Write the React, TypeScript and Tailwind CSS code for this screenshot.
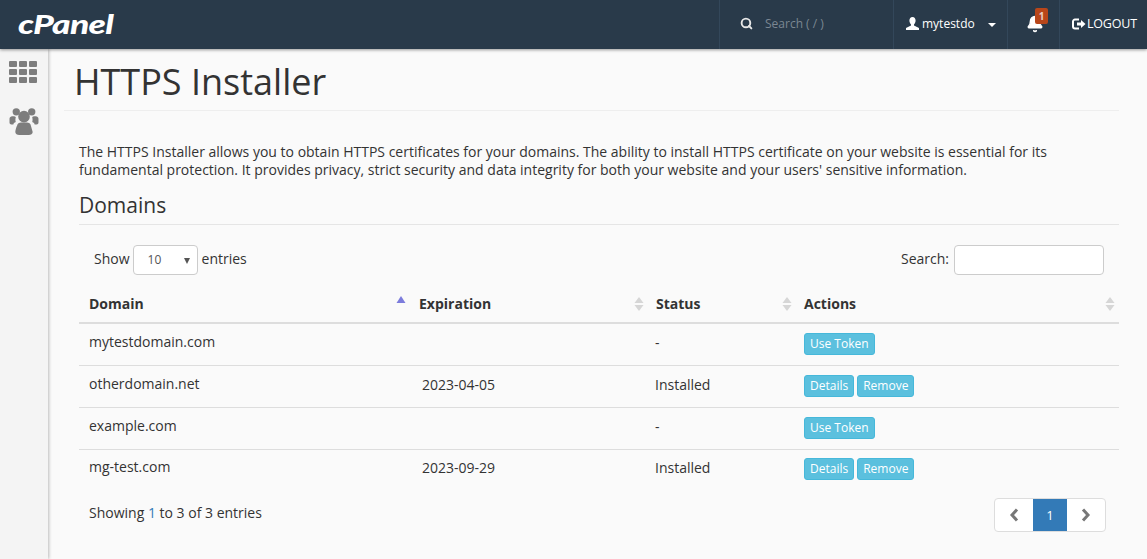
import { Search, Bell } from "lucide-react"

const rows = [
  { domain: "mytestdomain.com", expires: "", status: "-", installed: false },
  { domain: "otherdomain.net", expires: "2023-04-05", status: "Installed", installed: true },
  { domain: "example.com", expires: "", status: "-", installed: false },
  { domain: "mg-test.com", expires: "2023-09-29", status: "Installed", installed: true },
]

function SortArrows() {
  return (
    <svg width="10" height="16" viewBox="0 0 10 16" className="absolute right-0 top-[10px] fill-[#d6d6d6]">
      <path d="M5 1 9.5 7H.5z" />
      <path d="M5 15 9.5 9H.5z" />
    </svg>
  )
}

function InfoButton({ children }: { children: string }) {
  return (
    <button className="h-[22px] rounded-[3px] border border-[#46b8da] bg-[#5bc0de] px-[5px] text-xs leading-[18px] text-white">
      {children}
    </button>
  )
}

function Header() {
  return (
    <header className="relative z-10 flex h-[49px] shrink-0 items-center justify-between bg-[#293a4a] shadow-[0_1px_3px_rgba(0,0,0,0.4)]">
      <span className="mb-[2px] ml-[18px] inline-block origin-left scale-x-[1.36] font-['Lato'] text-[26px] font-black italic leading-none tracking-[-0.5px] text-white">cPanel</span>
      <div className="flex h-full">
        <div className="flex w-[174px] items-center border-l border-[#33475a] pb-[2px] pl-[20px]">
          <Search size={13} strokeWidth={3.5} className="text-[#e8e8e8]" />
          <span className="ml-[12px] text-xs text-[#7b8792]">Search ( / )</span>
        </div>
        <div className="flex w-[114px] items-center border-l border-[#33475a] pb-[2px] pl-[12px] text-xs text-white">
          <svg width="13" height="13" viewBox="0 0 13 13" className="fill-white">
            <path d="M6.5 0C8.4 0 9.6 1.5 9.6 3.6 9.6 5.300 8.800 6.700 8 7.500V8.500L13 11V13H0V11L5 8.500V7.500C4.200 6.700 3.400 5.300 3.400 3.600 3.400 1.500 4.600 0 6.500 0Z" />
          </svg>
          <span className="ml-[3px]">mytestdo</span>
          <span className="ml-[13px] mt-[3px] h-0 w-0 border-x-[4px] border-t-[4px] border-x-transparent border-t-white" />
        </div>
        <div className="relative flex w-[52px] items-center border-l border-[#33475a] pb-[2px] pl-[18px]">
          <Bell size={18} fill="white" className="text-white" />
          <span className="absolute left-[27px] top-[8px] flex h-[16px] w-[13px] items-center justify-center rounded-[2px] bg-[#b8461a] text-[10px] font-bold text-[#e9cfc4]">1</span>
        </div>
        <div className="flex w-[88px] items-center border-l border-[#33475a] pb-[2px] pl-[12px] text-[12.5px] text-white">
          <svg width="14" height="12" viewBox="0 0 14 12" className="fill-none stroke-white">
            <path strokeWidth="2" d="M7 1.500H3A2 2 0 0 0 1 3.500V8.500A2 2 0 0 0 3 10.500H7" />
            <path className="fill-white" strokeWidth="0" d="M5 4.500H9V2L13.500 6 9 10V7.500H5Z" />
          </svg>
          <span className="ml-[1px] tracking-[-0.2px]">LOGOUT</span>
        </div>
      </div>
    </header>
  )
}

function Sidebar() {
  return (
    <aside className="flex w-[48px] shrink-0 flex-col items-start bg-[#f4f4f4] pl-[9px] pt-[12px] shadow-[1px_0_3px_rgba(0,0,0,0.25)]">
      <div className="grid grid-cols-3 gap-[2px]">
        {Array.from({ length: 9 }).map((_, i) => (
          <span key={i} className="h-[6px] w-[8px] rounded-[1px] bg-[#7d7d7d]" />
        ))}
      </div>
      <svg width="30" height="28" viewBox="0 0 30 29" className="mt-[24px] fill-[#7d7d7d]">
        <circle cx="7" cy="5" r="3.800" />
        <circle cx="23" cy="5" r="3.800" />
        <path d="M0 12C0 10 2 9.500 4 9.500 5 9.500 6 10 6.500 10.500 6 12 6 14 6.500 15.500 5 16 4 17 4 18H2C.5 18 0 17 0 16Z" />
        <path d="M30 12C30 10 28 9.500 26 9.500 25 9.500 24 10 23.500 10.500 24 12 24 14 23.500 15.500 25 16 26 17 26 18H28C29.500 18 30 17 30 16Z" />
        <circle cx="15" cy="10" r="6" />
        <path d="M8 19C8 17 10 16 12 16H18C20 16 22 17 22 19L24 26C24 28 22 29 20 29H10C8 29 6 28 6 26 6 24 7 21 8 19Z" />
      </svg>
    </aside>
  )
}

export default function App() {
  return (
    <div className="flex h-[559px] flex-col overflow-hidden bg-[#fafafa] font-['Open_Sans',sans-serif] text-sm text-[#333]">
      <Header />
      <div className="flex flex-1">
        <Sidebar />
        <main className="flex-1 pl-[16px] pr-[28px]">
          <h1 className="h-[62px] border-b border-[#eeeeee] pl-[10px] pt-[11px] text-[36px] leading-[44px]">HTTPS Installer</h1>
          <div className="pl-[15px]">
            <p className="mt-[32px] leading-[18px]">
              The HTTPS Installer allows you to obtain HTTPS certificates for your domains. The ability to install HTTPS certificate on your website is essential for its fundamental protection. It provides privacy, strict security and data integrity for both your website and your users' sensitive information.
            </p>
            <h2 className="mt-[12px] h-[34px] border-b border-[#e5e5e5] text-[21px] leading-[28px]">Domains</h2>
            <div className="mt-[19px] flex h-[31px] items-center justify-between pl-[15px] pr-[15px]">
              <div className="flex items-center">
                <span className="pb-[2px]">Show</span>
                <div className="relative ml-[3px] flex h-[30px] w-[65px] items-center rounded border border-[#cccccc] bg-white pl-[14px] text-xs text-[#555]">
                  10
                  <span className="absolute right-[7px] top-[12px] h-0 w-0 border-x-[3.500px] border-t-[6px] border-x-transparent border-t-[#555]" />
                </div>
                <span className="ml-[4px] pb-[2px]">entries</span>
              </div>
              <div className="flex items-center">
                <span className="pb-[2px]">Search:</span>
                <div className="ml-[5px] h-[30px] w-[150px] rounded border border-[#cccccc] bg-white" />
              </div>
            </div>
            <table className="mt-[11px] w-full table-fixed border-collapse">
              <thead>
                <tr className="h-[37px] border-b-2 border-[#dddddd] text-left font-bold">
                  <th className="relative w-[330px] pb-[1px] pl-[10px]">
                    Domain
                    <svg width="10" height="7" viewBox="0 0 10 7" className="absolute right-[3px] top-[10px] fill-[#7c7cdc]">
                      <path d="M5 0 9.500 7H.5z" />
                    </svg>
                  </th>
                  <th className="relative w-[237px] pb-[1px] pl-[10px]">Expiration<div className="absolute inset-y-0 right-[2px]"><SortArrows /></div></th>
                  <th className="relative w-[148px] pb-[1px] pl-[10px]">Status<div className="absolute inset-y-0 right-[2px]"><SortArrows /></div></th>
                  <th className="relative pb-[1px] pl-[10px]">Actions<div className="absolute inset-y-0 right-[4px]"><SortArrows /></div></th>
                </tr>
              </thead>
              <tbody>
                {rows.map((row) => (
                  <tr key={row.domain} className="h-[42px] border-b border-[#dddddd] last:h-[40px] last:border-b-0">
                    <td className="pb-[5px] pl-[10px]">{row.domain}</td>
                    <td className="pb-[2px] pl-[13px]">{row.expires}</td>
                    <td className="pb-[2px] pl-[9px]">{row.status}</td>
                    <td className="pl-[10px]">
                      <div className="flex gap-[3px]">
                        {row.installed ? (
                          <>
                            <InfoButton>Details</InfoButton>
                            <InfoButton>Remove</InfoButton>
                          </>
                        ) : (
                          <InfoButton>Use Token</InfoButton>
                        )}
                      </div>
                    </td>
                  </tr>
                ))}
              </tbody>
            </table>
            <div className="mt-[9px] flex items-center justify-between">
              <span className="pb-[4px] pl-[10px]">
                Showing <span className="text-[#337ab7]">1</span> to 3 of 3 entries
              </span>
              <div className="mr-[13px] flex h-[34px] overflow-hidden rounded border border-[#dddddd] bg-white">
                <span className="flex w-[38px] items-center justify-center">
                  <svg width="10" height="14" viewBox="0 0 10 14" className="fill-none stroke-[#777]"><path strokeWidth="3" d="M8 1.500 3 7l5 5.500" /></svg>
                </span>
                <span className="flex w-[34px] items-center justify-center bg-[#337ab7] text-[13px] text-white">1</span>
                <span className="flex w-[38px] items-center justify-center">
                  <svg width="10" height="14" viewBox="0 0 10 14" className="fill-none stroke-[#777]"><path strokeWidth="3" d="M2 1.500 7 7l-5 5.500" /></svg>
                </span>
              </div>
            </div>
          </div>
        </main>
      </div>
    </div>
  )
}
